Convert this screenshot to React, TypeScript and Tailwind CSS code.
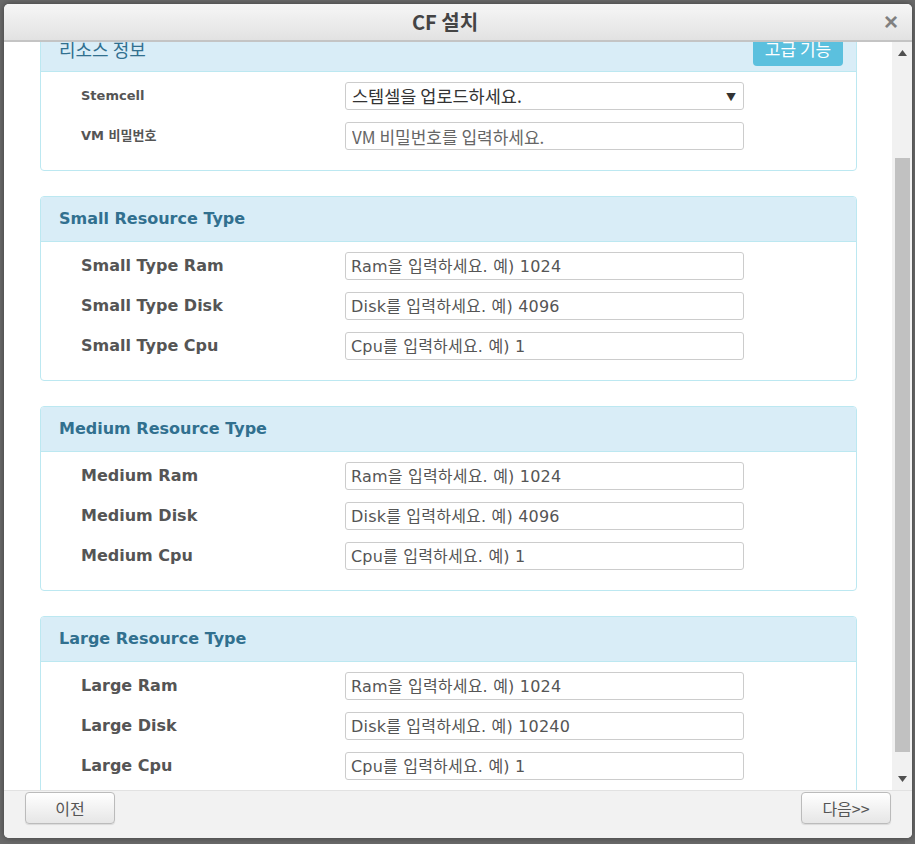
import React from "react";

const FONT = "font-['DejaVu_Sans','Noto_Sans_CJK_KR',sans-serif]";

type Row = { label: string; placeholder: string };

function Field({ row }: { row: Row }) {
  return (
    <div className="grid grid-cols-[304px_399px] items-center">
      <div className="pl-[40px] text-[16px] font-bold text-[#555555]">{row.label}</div>
      <input
        className="h-[28px] w-[399px] rounded-[3px] border border-[#cccccc] bg-white px-[5px] text-[16px] tracking-[0.2px] text-[#555555] placeholder:text-[#555555] outline-none"
        placeholder={row.placeholder}
      />
    </div>
  );
}

function ResourcePanel({ title, rows }: { title: string; rows: Row[] }) {
  return (
    <div className="rounded-[4px] border border-[#bce8f1] bg-white">
      <div className="flex h-[45px] items-center rounded-t-[3px] border-b border-[#bce8f1] bg-[#d9edf7] pl-[18px] text-[16px] font-bold text-[#31708f]">
        {title}
      </div>
      <div className="flex flex-col gap-[12px] pt-[10px] pb-[20px]">
        {rows.map((r) => (
          <Field key={r.label} row={r} />
        ))}
      </div>
    </div>
  );
}

export default function App() {
  const panels: { title: string; rows: Row[] }[] = [
    {
      title: "Small Resource Type",
      rows: [
        { label: "Small Type Ram", placeholder: "Ram을 입력하세요. 예) 1024" },
        { label: "Small Type Disk", placeholder: "Disk를 입력하세요. 예) 4096" },
        { label: "Small Type Cpu", placeholder: "Cpu를 입력하세요. 예) 1" },
      ],
    },
    {
      title: "Medium Resource Type",
      rows: [
        { label: "Medium Ram", placeholder: "Ram을 입력하세요. 예) 1024" },
        { label: "Medium Disk", placeholder: "Disk를 입력하세요. 예) 4096" },
        { label: "Medium Cpu", placeholder: "Cpu를 입력하세요. 예) 1" },
      ],
    },
    {
      title: "Large Resource Type",
      rows: [
        { label: "Large Ram", placeholder: "Ram을 입력하세요. 예) 1024" },
        { label: "Large Disk", placeholder: "Disk를 입력하세요. 예) 10240" },
        { label: "Large Cpu", placeholder: "Cpu를 입력하세요. 예) 1" },
      ],
    },
  ];

  return (
    <div className={`${FONT} h-[844px] w-[915px] overflow-hidden bg-[#6a6a6a] pt-[4px] pl-[4px]`}>
      <div className="flex h-[834px] w-[908px] flex-col overflow-hidden rounded-[5px] bg-[#f2f2f2] shadow-[0_0_6px_rgba(0,0,0,0.4)]">
        {/* Header */}
        <div className="relative flex h-[38px] shrink-0 items-center justify-center border-b-2 border-[#c4c4c4] bg-gradient-to-b from-[#f6f6f6] to-[#e2e2e2] pr-[26px]">
          <span className="text-[20px] font-bold text-[#444444] font-['Noto_Sans_CJK_KR',sans-serif]">CF 설치</span>
          <span className="absolute right-[14px] top-[5px] text-[24px] font-bold leading-[26px] text-[#808080] font-['Liberation_Sans',sans-serif]">×</span>
        </div>

        {/* Body */}
        <div className="flex h-[748px] shrink-0">
          <div className="h-full w-[888px] overflow-hidden bg-white">
            <div className="-mt-[16px] flex flex-col gap-[25px] pl-[36px] pr-[35px]">
              {/* First panel (scrolled) */}
              <div className="rounded-[4px] border border-[#bce8f1] bg-white">
                <div className="flex h-[45px] items-center justify-between rounded-t-[3px] border-b border-[#bce8f1] bg-[#d9edf7] pl-[18px] pr-[13px]">
                  <span className="mt-[1px] text-[18px] text-[#31708f] font-['Noto_Sans_CJK_KR',sans-serif]">리소스 정보</span>
                  <button className="mb-[5px] h-[34px] w-[90px] self-end rounded-[4px] bg-[#5bc0de] text-[17px] text-white font-['Noto_Sans_CJK_KR',sans-serif]">고급 기능</button>
                </div>
                <div className="flex flex-col gap-[12px] pt-[10px] pb-[20px]">
                  <div className="grid grid-cols-[304px_399px] items-center">
                    <div className="pl-[40px] text-[13px] font-bold text-[#555555]">Stemcell</div>
                    <div className="flex h-[28px] w-[399px] items-center justify-between rounded-[3px] border border-[#cccccc] bg-white pl-[6px] pr-[7px] text-[17.5px] text-[#333333] font-['Noto_Sans_CJK_KR',sans-serif]">
                      <span>스템셀을 업로드하세요.</span>
                      <span className="text-[10px] text-[#333333]">▼</span>
                    </div>
                  </div>
                  <div className="grid grid-cols-[304px_399px] items-center">
                    <div className="pl-[40px] text-[13px] font-bold text-[#555555]">VM 비밀번호</div>
                    <input
                      className="h-[28px] w-[399px] rounded-[3px] border border-[#cccccc] bg-white px-[6px] text-[17px] text-[#555555] placeholder:text-[#666666] outline-none font-['Noto_Sans_CJK_KR',sans-serif]"
                      placeholder="VM 비밀번호를 입력하세요."
                    />
                  </div>
                </div>
              </div>
              {panels.map((p) => (
                <ResourcePanel key={p.title} title={p.title} rows={p.rows} />
              ))}
            </div>
          </div>
          {/* Scrollbar */}
          <div className="flex h-full w-[20px] flex-col items-center bg-[#f1f1f1]">
            <div className="flex h-[18px] w-full items-center justify-center pt-[4px]">
              <svg width="9" height="6" viewBox="0 0 9 6"><path d="M0 6 L4.5 0 L9 6 Z" fill="#505050" /></svg>
            </div>
            <div className="mt-[98px] h-[594px] w-[15px] bg-[#c1c1c1]" />
            <div className="flex flex-1 items-end justify-center pb-[8px]">
              <svg width="9" height="6" viewBox="0 0 9 6"><path d="M0 0 L9 0 L4.5 6 Z" fill="#505050" /></svg>
            </div>
          </div>
        </div>

        {/* Footer */}
        <div className="flex flex-1 items-start justify-between border-t border-[#e2e2e2] bg-[#f2f2f2] pl-[21px] pr-[21px] pt-[1px]">
          <button className="h-[32px] w-[90px] rounded-[4px] border border-[#bbbbbb] bg-gradient-to-b from-[#ffffff] to-[#e6e6e6] text-[16px] text-[#555555] shadow-[0_1px_1px_rgba(0,0,0,0.1)] font-['Noto_Sans_CJK_KR',sans-serif]">
            이전
          </button>
          <button className="h-[32px] w-[90px] rounded-[4px] border border-[#bbbbbb] bg-gradient-to-b from-[#ffffff] to-[#e6e6e6] text-[16px] text-[#555555] shadow-[0_1px_1px_rgba(0,0,0,0.1)] font-['Noto_Sans_CJK_KR',sans-serif]">
            다음&gt;&gt;
          </button>
        </div>
      </div>
    </div>
  );
}
